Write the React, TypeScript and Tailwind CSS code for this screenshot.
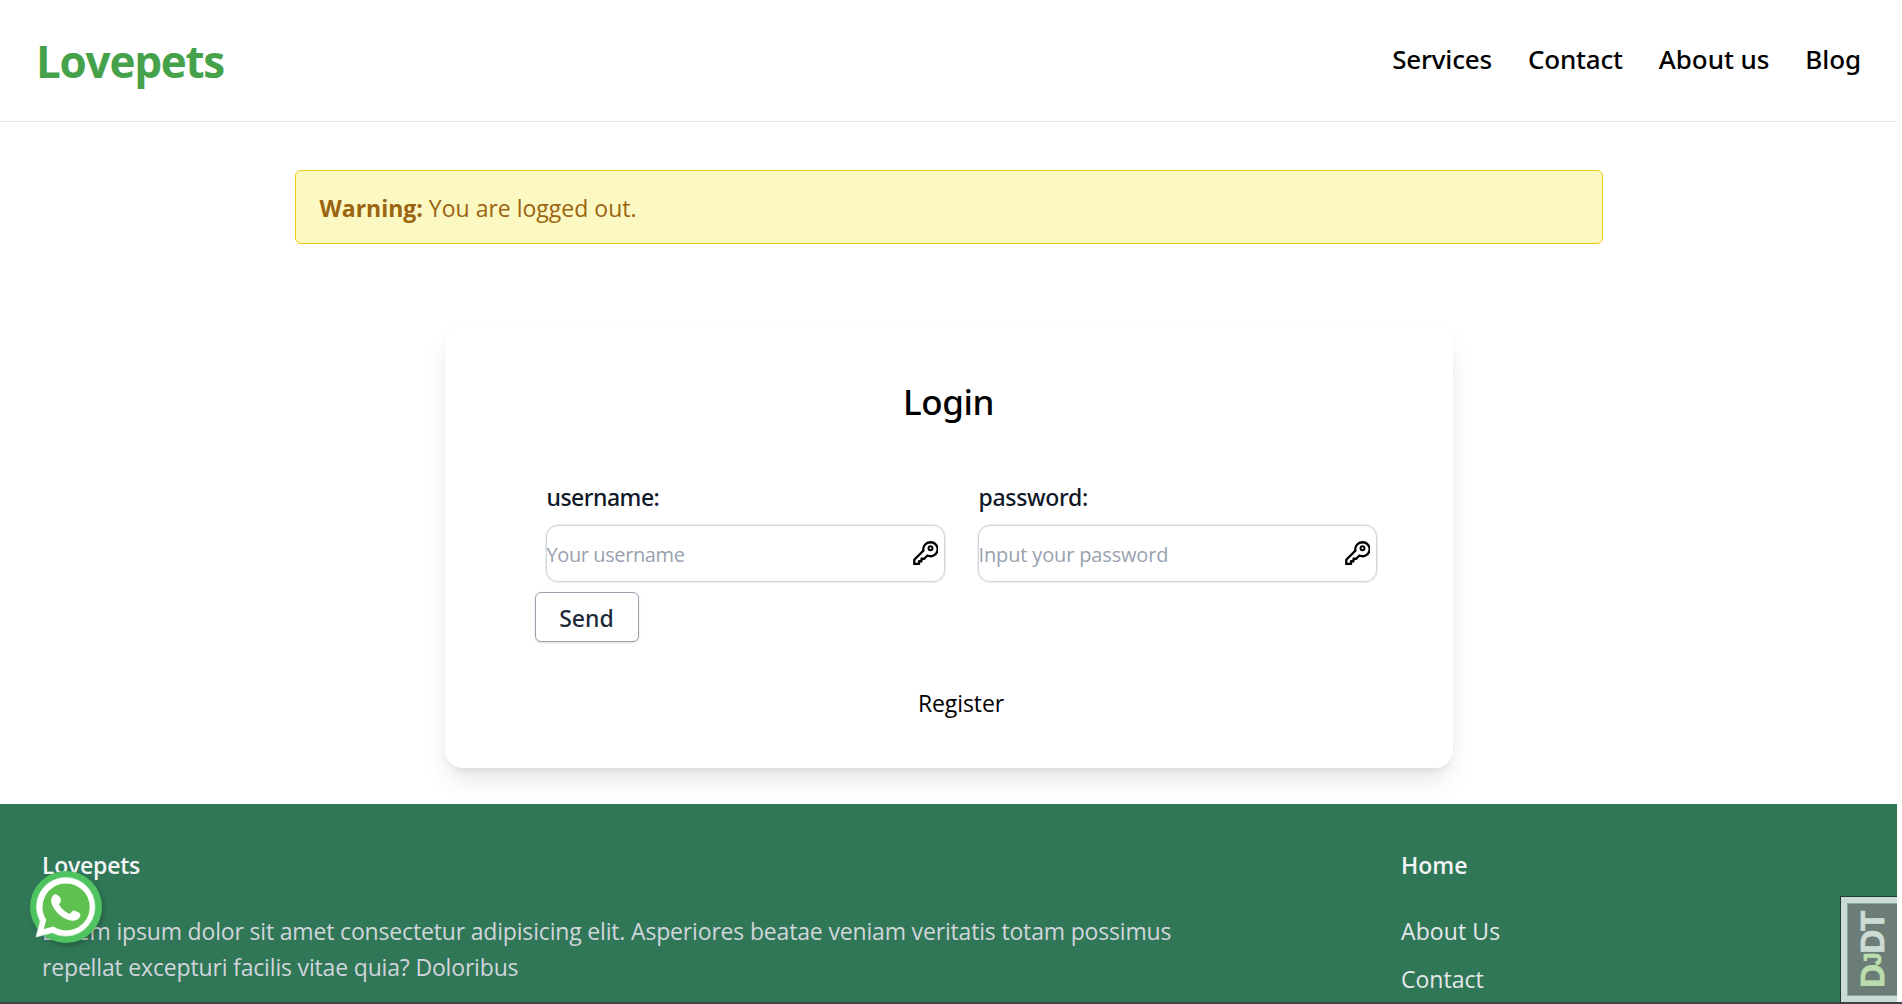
import type { ReactNode } from "react";

function KeyIcon() {
  return (
    <svg
      className="pointer-events-none absolute top-[15px] right-[7px] size-[25px]"
      viewBox="0 0 24 24"
      fill="none"
      stroke="#000"
      strokeWidth="2.2"
      strokeLinejoin="round"
    >
      <path d="M10 10.2 1.2 19V23h4.6v-2.600h2.400v-2.400h2.600l3-3.100A6.900 6.700 0 1 0 10 10.200Z" />
      <circle cx="16.800" cy="7.900" r="1.900" strokeWidth="1.900" />
    </svg>
  );
}

function Field({ label, name, children }: { label: ReactNode; name: string; children: ReactNode }) {
  return (
    <div className="w-[399px]">
      <label
        htmlFor={name}
        className="flex h-9 items-center pl-px font-['Noto_Sans',sans-serif] text-[23px] font-medium text-gray-900"
      >
        {label}
      </label>
      <div className="relative mt-[10px] h-[57px]">
        {children}
        <KeyIcon />
      </div>
    </div>
  );
}

const inputClass =
  "h-full w-full rounded-xl border-[1.5px] border-gray-300 bg-white px-0 pt-0.5 text-[20px] outline-none ring-1 ring-gray-200/70 placeholder:text-gray-400";

function WhatsAppButton() {
  return (
    <a
      href="#"
      className="absolute top-[871px] left-[30px] size-[72px] rounded-full bg-[#4fc35f] shadow-[2px_3px_5px_rgba(0,0,0,0.22)]"
    >
      <svg className="size-full overflow-visible" viewBox="0 0 72 72">
        <path
          d="M36 6.500A29.300 29.300 0 0 0 10.200 50L6 66l16.200-4.200A29.300 29.300 0 1 0 36 6.500Z"
          fill="#fff"
          stroke="#d9efdb"
          strokeWidth="0.8"
        />
        <path
          d="M36 12.500A23.500 23.500 0 0 0 16.300 48.800l-2.500 9.200 9.500-2.400A23.500 23.500 0 1 0 36 12.500Z"
          fill="#5fc14f"
        />
        <path
          d="M26.300 23.400c-1.100-.3-2.300.1-3.200 1.200-1.700 2-2.400 4.500-1.600 7.400 2 7.300 8.900 14.200 17 17.100 5.400 1.600 9.300 0 11.200-2.900.8-1.300 1-2.900.4-3.600-1.700-1.500-4.200-2.800-6.300-3.200-1.500.1-2.700 2.600-4 3.300-3.600-.7-8.900-5.300-10.700-9.200-.1-1.300 1.900-2.400 2-4.100-.4-2-1.900-5.300-4.800-6Z"
          fill="#fff"
        />
      </svg>
    </a>
  );
}

function DebugToolbarHandle() {
  return (
    <div className="absolute top-[896px] left-[1840px] h-[106px] w-[57px] border-t border-l border-[#1d3d30] bg-[#cadbd3] py-1.5 pl-1.5">
      <div className="flex h-full w-full items-center justify-center border-y border-l border-[#8ca79b] bg-[#6b7d76] pr-px">
        <span className="rotate-180 font-['Liberation_Sans',sans-serif] text-[33px] leading-none font-bold tracking-[-1.2px] whitespace-nowrap text-[#cbdcd4] [-webkit-text-stroke:0.8px_currentColor] [writing-mode:vertical-rl]">
          <span className="text-[#bbddad]">
            D<span className="text-[23px]">J</span>
          </span>
          DT
        </span>
      </div>
    </div>
  );
}

export default function App() {
  return (
    <div className="relative h-[1004px] w-[1902px] overflow-hidden bg-[#fdfdfd] font-['Open_Sans',sans-serif] text-black">
      <div className="h-[1002px] w-[1897px] overflow-hidden bg-white">
        <header className="flex h-[122px] items-center justify-between border-b border-[#e5e5e5] px-9">
          <a href="#" className="text-[44px] leading-[60px] font-bold tracking-[-1.25px] text-[#46a24a]">
            Lovepets
          </a>
          <nav className="mb-[3px] flex gap-9 font-['Noto_Sans',sans-serif] text-[26px] leading-[42px] font-medium">
            <a href="#" className="tracking-[-0.2px]">Services</a>
            <a href="#" className="tracking-[-0.2px]">Contact</a>
            <a href="#" className="tracking-[-0.05px]">About us</a>
            <a href="#" className="tracking-[-0.1px]">Blog</a>
          </nav>
        </header>

        <main className="flex flex-col items-center">
          <div className="mt-12 h-[74px] w-[1308px] rounded-md border border-[#f0c90f] bg-[#fcf8c2] px-6 pt-[19px] text-[23px] leading-9 text-[#9a6410]">
            <strong className="font-bold">Warning:</strong> You are logged out.
          </div>

          <section className="mt-[81px] flex h-[443px] w-[1008px] flex-col items-center rounded-[18px] bg-white pt-[53px] shadow-[0_15px_26px_-4px_rgba(0,0,0,0.1),0_6px_10px_-5px_rgba(0,0,0,0.1)]">
            <h1 className="font-['Noto_Sans',sans-serif] text-[35px] leading-[48px] font-medium tracking-[-0.4px]">
              Login
            </h1>
            <form className="mt-[53px] ml-[25px] w-[831px]">
              <div className="flex justify-between">
                <Field name="username" label={<span className="tracking-[-0.5px]">username:</span>}>
                  <input id="username" placeholder="Your username" className={inputClass + " tracking-[-0.4px]"} />
                </Field>
                <Field name="password" label={<span className="tracking-[-0.3px]">password:</span>}>
                  <input id="password" placeholder="Input your password" className={inputClass + " tracking-[-0.15px]"} />
                </Field>
              </div>
              <button
                type="button"
                className="mt-[10px] -ml-[11px] block h-[50px] w-[104px] rounded-md border border-gray-400 bg-white pt-0.5 font-['Noto_Sans',sans-serif] text-[23px] leading-9 font-medium text-gray-800 shadow"
              >
                Send
              </button>
            </form>
            <a href="#" className="mt-[43px] ml-[25px] text-[23px] leading-9 tracking-[-0.1px]">Register</a>
          </section>
        </main>

        <footer className="mt-9 flex h-[198px] bg-[#307757] pt-[43px] pl-[42px] text-[23px] leading-9">
          <div className="w-[1359px]">
            <h2 className="font-semibold tracking-[-0.25px] text-gray-100">Lovepets</h2>
            <p className="mt-[30px] w-[1180px] tracking-[-0.17px] text-gray-300">
              Lorem ipsum dolor sit amet consectetur adipisicing elit. Asperiores beatae veniam veritatis totam possimus
              repellat excepturi facilis vitae quia? Doloribus
            </p>
          </div>
          <div className="flex flex-col">
            <h2 className="font-semibold text-gray-100">Home</h2>
            <a href="#" className="mt-[30px] tracking-[0.1px] text-gray-200">About Us</a>
            <a href="#" className="mt-3 text-gray-200">Contact</a>
          </div>
        </footer>
      </div>
      <div className="h-0.5 bg-[#434343]" />

      <WhatsAppButton />
      <DebugToolbarHandle />
    </div>
  );
}
